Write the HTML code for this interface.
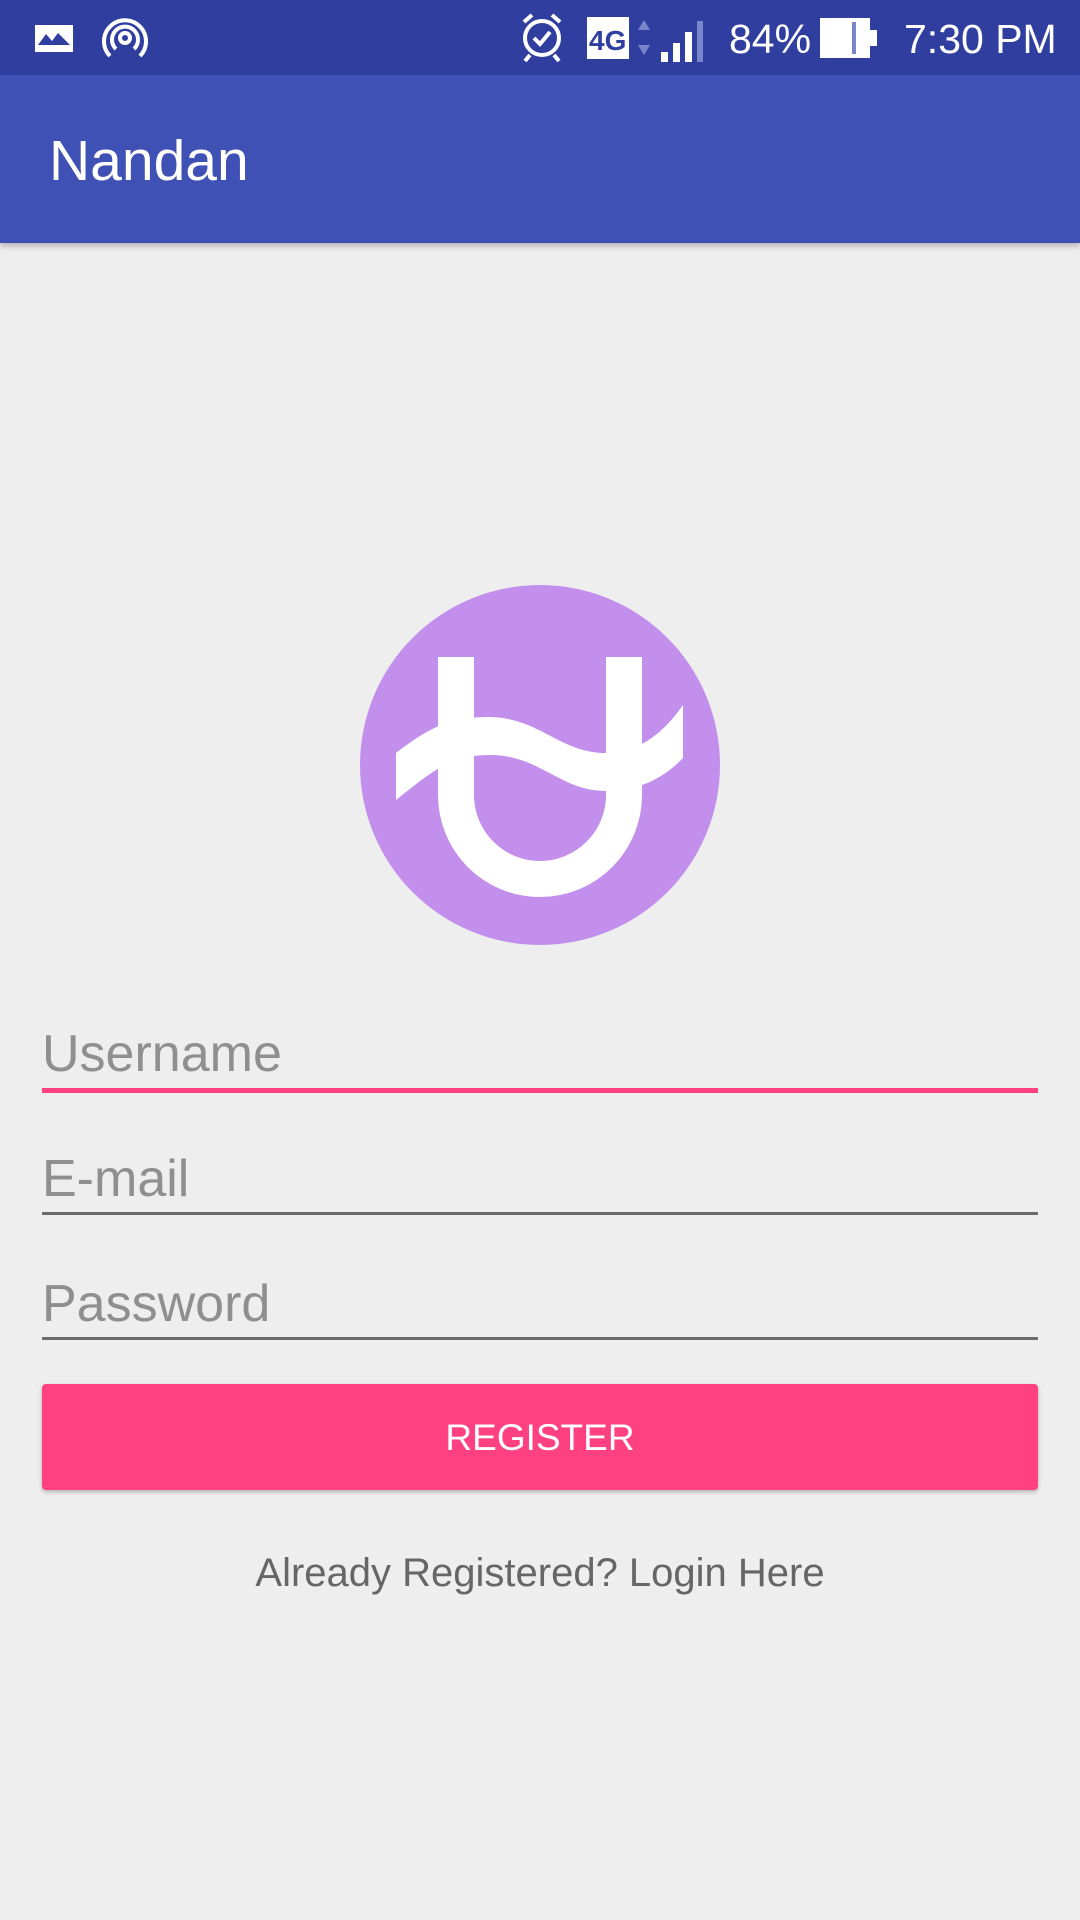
<!DOCTYPE html>
<html><head><meta charset="utf-8"><style>
*{margin:0;padding:0;box-sizing:border-box}
body{width:1080px;height:1920px;background:#eeeeee;font-family:"Liberation Sans",sans-serif;position:relative;overflow:hidden}
.sb{position:absolute;left:0;top:0;width:1080px;height:75px;background:#303f9f}
.tb{position:absolute;left:0;top:75px;width:1080px;height:168px;background:#3f51b5;box-shadow:0 3px 6px rgba(0,0,0,.25)}
.t{position:absolute;color:#fff;white-space:nowrap}
.hint{position:absolute;left:42px;color:#8f8f8f;font-size:52px}
.line{position:absolute;left:42px;width:996px;background:#6a6a6a;height:3px}
</style></head><body>
<div class="sb">
 <svg width="1080" height="75" style="position:absolute;left:0;top:0">
  <rect x="35" y="25" width="38" height="27" fill="#fff"/>
  <path d="M38 45 L46 34 L52 41 L58 33 L70 45 Z" fill="#303f9f"/>
  <g fill="none" stroke="#fff" stroke-width="4">
   <circle cx="125" cy="38" r="5"/>
   <path d="M116 49 A13 13 0 1 1 134 49"/>
   <path d="M110 56 A21 21 0 1 1 140 56"/>
   <circle cx="542" cy="38" r="17"/>
   <path d="M534 38 l6 6 l10 -12"/>
   <path d="M524 22 l8 -7 M560 22 l-8 -7 M530 55 l-5 6 M554 55 l5 6"/>
  </g>
  <rect x="587" y="17" width="42" height="42" fill="#fff"/>
  <text x="589" y="50" font-size="28" font-weight="bold" fill="#303f9f" font-family="Liberation Sans">4G</text>
  <path d="M638 30 l6 -10 l6 10 Z M638 45 l6 10 l6 -10 Z" fill="#7986cb"/>
  <rect x="661" y="52" width="7" height="10" fill="#fff"/>
  <rect x="673" y="43" width="7" height="19" fill="#fff"/>
  <rect x="685" y="32" width="7" height="30" fill="#fff"/>
  <rect x="697" y="21" width="6" height="41" fill="#7986cb"/>
  <rect x="820" y="18" width="50" height="40" fill="#fff"/>
  <rect x="852" y="22" width="4" height="32" fill="#7986cb"/>
  <rect x="870" y="30" width="7" height="16" fill="#fff"/>
 </svg>
 <div class="t" style="left:729px;top:16px;font-size:41px">84%</div>
 <div class="t" style="left:904px;top:16px;font-size:41px">7:30 PM</div>
</div>
<div class="tb"><div class="t" style="left:49px;top:53px;font-size:57px">Nandan</div></div>
<svg width="360" height="360" style="position:absolute;left:360px;top:585px" viewBox="0 0 360 360">
 <circle cx="180" cy="180" r="180" fill="#c28fed"/>
 <path d="M96,72 V210 A84,84 0 0 0 264,210 V72" fill="none" stroke="#fff" stroke-width="36"/>
 <path d="M36,168 C70,142 90,132 130,132 C180,133 200,168 246,168 C280,168 305,146 323,120 L323,173 C305,192 280,206 246,206 C200,206 180,170 130,170 C90,170 70,188 36,215 Z" fill="#fff"/>
</svg>
<div class="hint" style="top:1024px">Username</div>
<div class="line" style="top:1088px;height:5px;background:#ff4081"></div>
<div class="hint" style="top:1149px">E-mail</div>
<div class="line" style="top:1212px"></div>
<div class="hint" style="top:1274px">Password</div>
<div class="line" style="top:1337px"></div>
<div style="position:absolute;left:42px;top:1384px;width:996px;height:106px;background:#ff4081;border-radius:4px;box-shadow:0 2px 4px rgba(0,0,0,.25);color:#fff;font-size:37px;text-align:center;line-height:108px">REGISTER</div>
<div style="position:absolute;left:0;width:1080px;top:1551px;text-align:center;color:#666;font-size:40px">Already Registered? Login Here</div>
</body></html>
